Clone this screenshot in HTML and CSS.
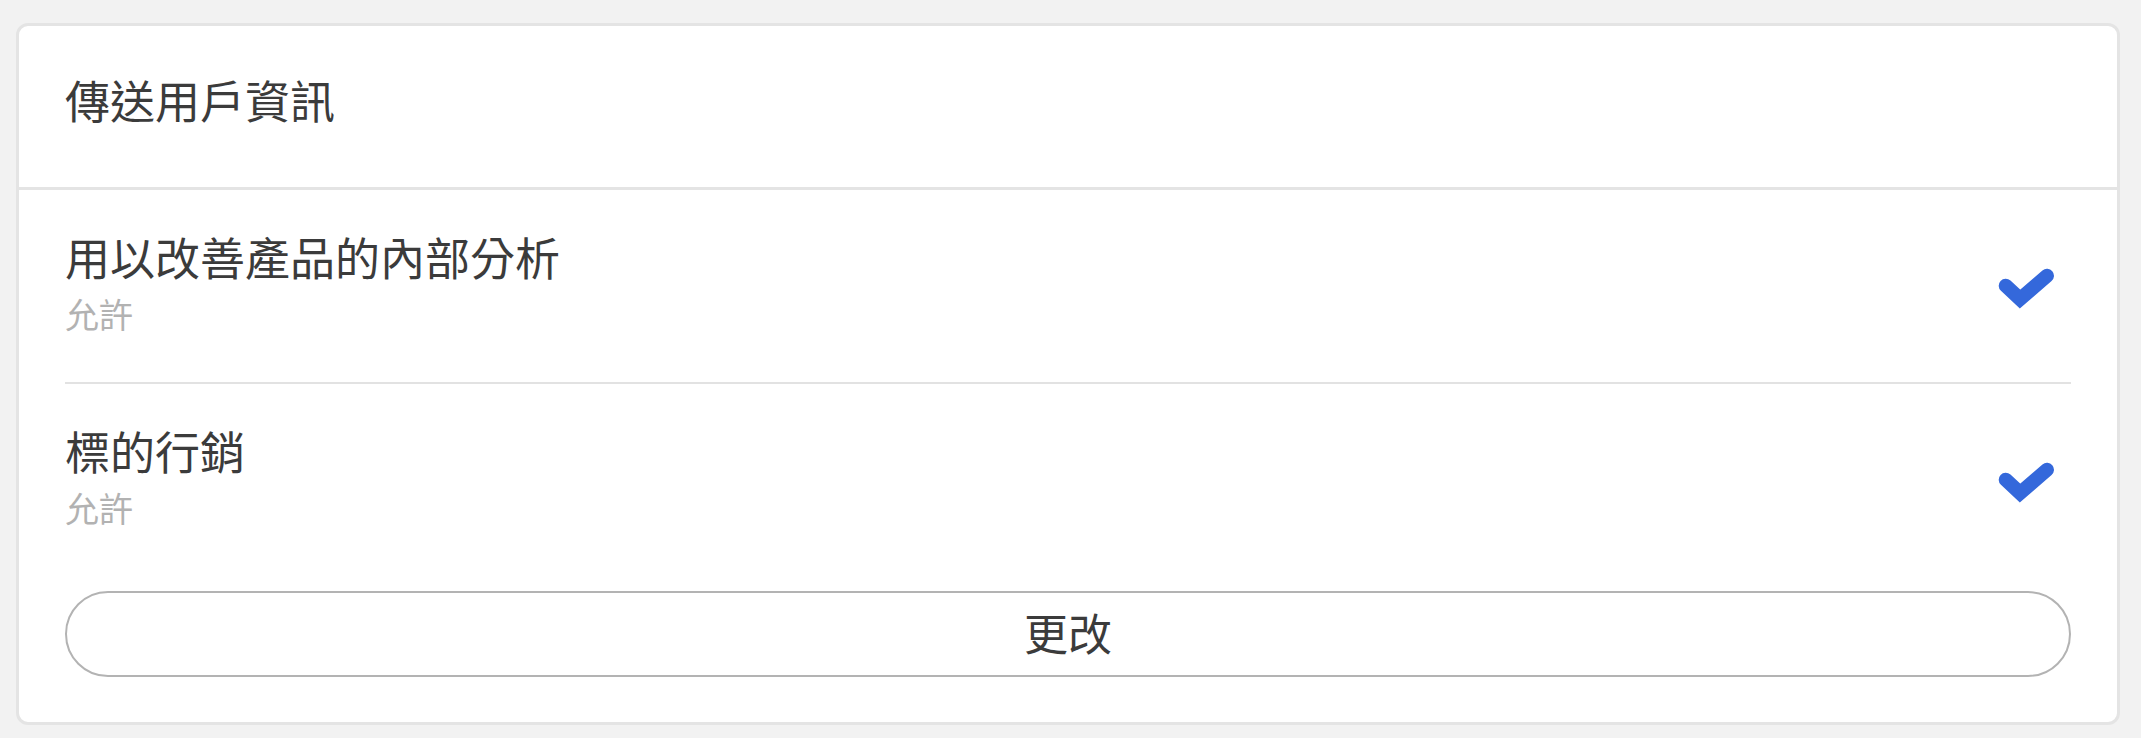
FILE: index.html
```html
<!DOCTYPE html>
<html lang="zh-Hant">
<head>
    <meta charset="UTF-8">
    <meta name="viewport" content="width=device-width, initial-scale=1.0">
    <title>傳送用戶資訊</title>
    <link rel="stylesheet" href="styles.css">
</head>
<body>
    <div class="card">
        <div class="card-header">傳送用戶資訊</div>

        <div class="card-body">
            <div class="option-row">
                <div class="option-text">
                    <div class="option-title">用以改善產品的內部分析</div>
                    <div class="option-status">允許</div>
                </div>
                <svg class="check" viewBox="0 0 64 52" width="64" height="52">
                    <path d="M8.7 26.7 L23 40 L50 16.7"/>
                </svg>
            </div>

            <div class="option-row">
                <div class="option-text">
                    <div class="option-title">標的行銷</div>
                    <div class="option-status">允許</div>
                </div>
                <svg class="check" viewBox="0 0 64 52" width="64" height="52">
                    <path d="M8.7 26.7 L23 40 L50 16.7"/>
                </svg>
            </div>

            <button class="change-btn">更改</button>
        </div>
    </div>
</body>
</html>
```

FILE: styles.css
```css
body {
    margin: 0;
    padding: 23px 21px 0 16px;
    background-color: #f2f2f2;
    font-family: "Noto Sans CJK TC", "Noto Sans", sans-serif;
    color: #3b3b3b;
}
.card {
    background: white;
    border: 3px solid #e4e4e4;
    border-radius: 12px;
}
.card-header {
    height: 164px;
    box-sizing: border-box;
    display: flex;
    align-items: center;
    padding: 0 46px 14px;
    font-size: 45px;
    border-bottom: 3px solid #e4e4e4;
}
.card-body {
    padding: 0 46px 45px;
}
.option-row {
    height: 194px;
    box-sizing: border-box;
    padding-bottom: 11px;
    display: flex;
    align-items: center;
    justify-content: space-between;
    border-bottom: 2px solid #e2e2e2;
}
.option-row:last-of-type {
    height: 192px;
    border-bottom: none;
}
.option-title {
    font-size: 45px;
}
.option-status {
    font-size: 34px;
    color: #b2b2b2;
}
.check {
    margin-right: 10px;
    margin-top: 8px;
}
.check path {
    fill: none;
    stroke: #3468db;
    stroke-width: 14;
    stroke-linecap: round;
    stroke-linejoin: miter;
}
.change-btn {
    display: block;
    width: 100%;
    height: 86px;
    margin-top: 15px;
    padding: 0 0 5px;
    background: white;
    border: 2px solid #b3b3b3;
    border-radius: 43px;
    font-family: inherit;
    font-size: 44px;
    color: #3b3b3b;
    cursor: pointer;
}
```
